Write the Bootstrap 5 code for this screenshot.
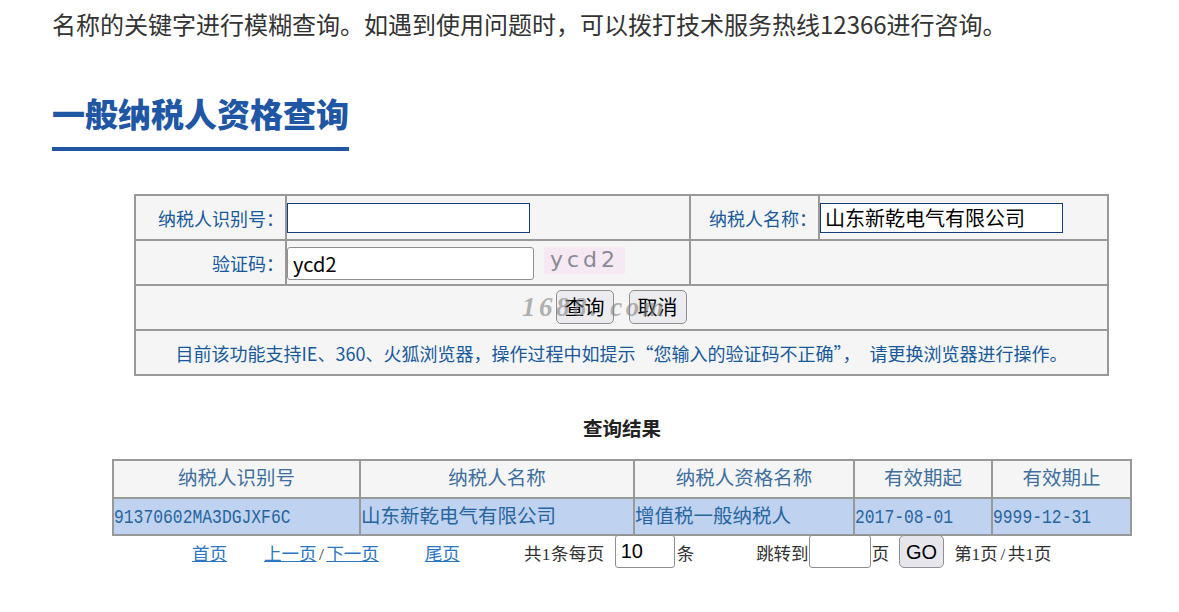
<!DOCTYPE html>
<html lang="zh-CN">
<head>
<meta charset="utf-8">
<title>一般纳税人资格查询</title>
<link href="https://cdn.jsdelivr.net/npm/bootstrap@5.3.0/dist/css/bootstrap.min.css" rel="stylesheet">
<style>
html,body{height:612px;overflow:hidden;background:#fff}
body{font-family:"Noto Sans CJK SC","Liberation Sans",sans-serif;color:#333}
.page-wrap{padding:0 52px}
.intro-text{font-size:24px;line-height:36px;margin:6px 0 0;color:#333;white-space:nowrap}
.title-wrap{margin-top:38px;height:71px}
.page-title{display:inline-block;font-size:33px;line-height:48px;font-weight:900;color:#1f57a4;margin:0;padding:9px 0 7px;border-bottom:4px solid #1f57a4;height:71px;letter-spacing:0}
.form-table{border-collapse:collapse;width:973px;margin:43px 0 0 82px;table-layout:fixed;background:#f5f5f5;color:#17599b;font-size:18px}
.form-table td{border:2px solid #999;padding:0;height:45px;position:relative}
.label-cell{text-align:right;padding:2px 1px 0 0!important}
.txt-in{font-size:20px;color:#000;height:30px;border:1px solid #123f76;background:#fff;padding:0 4px;width:243px;display:block;border-radius:0;outline:0;line-height:28px}
.code-in{width:247px;height:33px;border:1px solid #8f8f8f;border-radius:3px;background:#fff;font-size:20px;padding:0 5px;color:#000;outline:0;margin-top:2px}
.captcha-box{width:81px;height:27px;background:#f6e9f3;color:#8a8a94;font:22px/25px "DejaVu Sans",sans-serif;letter-spacing:4px;text-align:center;margin:0 0 5px 10px;white-space:nowrap}
.btn-row{text-align:center;padding-right:1px!important}
.act-btn{font-size:20px;line-height:24px;height:34px;padding:0 8px;background:#ebebf0;border:1px solid #8f8f8f;border-radius:5px;color:#000;margin:0 7.5px 1px}
.mark-168{position:absolute;left:386px;top:4px;z-index:3;pointer-events:none;font:italic 700 27px/34px "Liberation Serif",serif;letter-spacing:3.5px;color:rgba(130,130,130,.6);white-space:nowrap}
.mark-dot{padding-right:10px}
.notice-cell{text-align:center;font-size:18px;padding-top:2px!important}
.quote-gap{padding-right:9px}
.result-title{width:1018px;margin:40px 0 0 61px;text-align:center;font:700 19.5px/28px "Liberation Serif","Noto Sans CJK SC",serif;color:#222}
.result-table{border-collapse:collapse;table-layout:fixed;width:1018px;margin:15px 0 0 60px;color:#2f6295;font-size:19.5px;font-family:"Liberation Serif","Noto Sans CJK SC",serif;white-space:nowrap}
.result-table th{font-weight:400;background:#f5f5f5;text-align:center;border:2px solid #999;height:38px;padding:0;color:#3e6f9e}
.result-table td{background:#bfd2ef;border:2px solid #999;height:37px;padding:0;color:#27659f}
.mono-val{display:inline-block;font-family:"Liberation Mono",monospace;font-size:16.35px;transform:scaleY(1.22);transform-origin:50% 60%}
.pager{width:1018px;margin:1px 0 0 61px;height:34px;font:17.5px/34px "Liberation Serif","Noto Sans CJK SC",serif;color:#333;white-space:nowrap;display:flex;align-items:center}
.pager a{color:#2c77bf;text-decoration:underline}
.pg-first{margin-left:79px}
.pg-prev{margin-left:37px}
.pg-slash{padding:0 2.5px}
.pg-last{margin-left:46px}
.pg-total{margin-left:64px;letter-spacing:.4px}
.pg-size{width:60px;height:33px;border:1px solid #8f8f8f;border-radius:3px;font:20px/30px "Liberation Sans",sans-serif;padding:0 5px;margin:0 2px 5px 10px;color:#000;background:#fff;outline:0}
.pg-jump{margin-left:62px}
.pg-page{width:62px;height:33px;border:1px solid #8f8f8f;border-radius:3px;background:#fff;outline:0;margin:0 1px 5px 0}
.go-btn{width:45px;height:33px;background:#e6e6ec;border:1px solid #8f8f8f;border-radius:5px;color:#000;font:20px/28px "Liberation Sans",sans-serif;margin:0 10px 5px 10px;padding:0}
</style>
</head>
<body>
<div class="page-wrap">
  <p class="intro-text">名称的关键字进行模糊查询。如遇到使用问题时，可以拨打技术服务热线12366进行咨询。</p>
  <div class="title-wrap"><h2 class="page-title">一般纳税人资格查询</h2></div>
  <table class="form-table">
    <colgroup><col style="width:151px"><col style="width:404px"><col style="width:129px"><col style="width:289px"></colgroup>
    <tr>
      <td class="label-cell">纳税人识别号：</td>
      <td><input class="txt-in" type="text" aria-label="纳税人识别号"></td>
      <td class="label-cell">纳税人名称：</td>
      <td><input class="txt-in" type="text" value="山东新乾电气有限公司" aria-label="纳税人名称"></td>
    </tr>
    <tr>
      <td class="label-cell">验证码：</td>
      <td><div class="d-flex align-items-center"><input class="code-in" type="text" value="ycd2" aria-label="验证码"><div class="captcha-box">ycd2</div></div></td>
      <td colspan="2"></td>
    </tr>
    <tr>
      <td colspan="4" class="btn-row"><span class="mark-168">1688<span class="mark-dot">.</span>com</span><button class="act-btn" type="button">查询</button><button class="act-btn" type="button">取消</button></td>
    </tr>
    <tr>
      <td colspan="4" class="notice-cell">目前该功能支持IE、360、火狐浏览器，操作过程中如提示“您输入的验证码不正确”<span class="quote-gap">，</span>请更换浏览器进行操作。</td>
    </tr>
  </table>
  <div class="result-title">查询结果</div>
  <table class="result-table">
    <colgroup><col style="width:247px"><col style="width:274px"><col style="width:220px"><col style="width:138px"><col style="width:139px"></colgroup>
    <tr><th>纳税人识别号</th><th>纳税人名称</th><th>纳税人资格名称</th><th>有效期起</th><th>有效期止</th></tr>
    <tr><td><span class="mono-val">91370602MA3DGJXF6C</span></td><td>山东新乾电气有限公司</td><td>增值税一般纳税人</td><td><span class="mono-val">2017-08-01</span></td><td><span class="mono-val">9999-12-31</span></td></tr>
  </table>
  <div class="pager">
    <a class="pg-first" href="#">首页</a>
    <a class="pg-prev" href="#">上一页</a><span class="pg-slash">/</span><a href="#">下一页</a>
    <a class="pg-last" href="#">尾页</a>
    <span class="pg-total">共1条每页</span><input class="pg-size" type="text" value="10" aria-label="每页条数"><span>条</span>
    <span class="pg-jump">跳转到</span><input class="pg-page" type="text" aria-label="跳转页"><span>页</span>
    <button class="go-btn" type="button">GO</button><span>第1页<span class="pg-slash">/</span>共1页</span>
  </div>
</div>
<script src="https://cdn.jsdelivr.net/npm/bootstrap@5.3.0/dist/js/bootstrap.bundle.min.js"></script>
</body>
</html>
